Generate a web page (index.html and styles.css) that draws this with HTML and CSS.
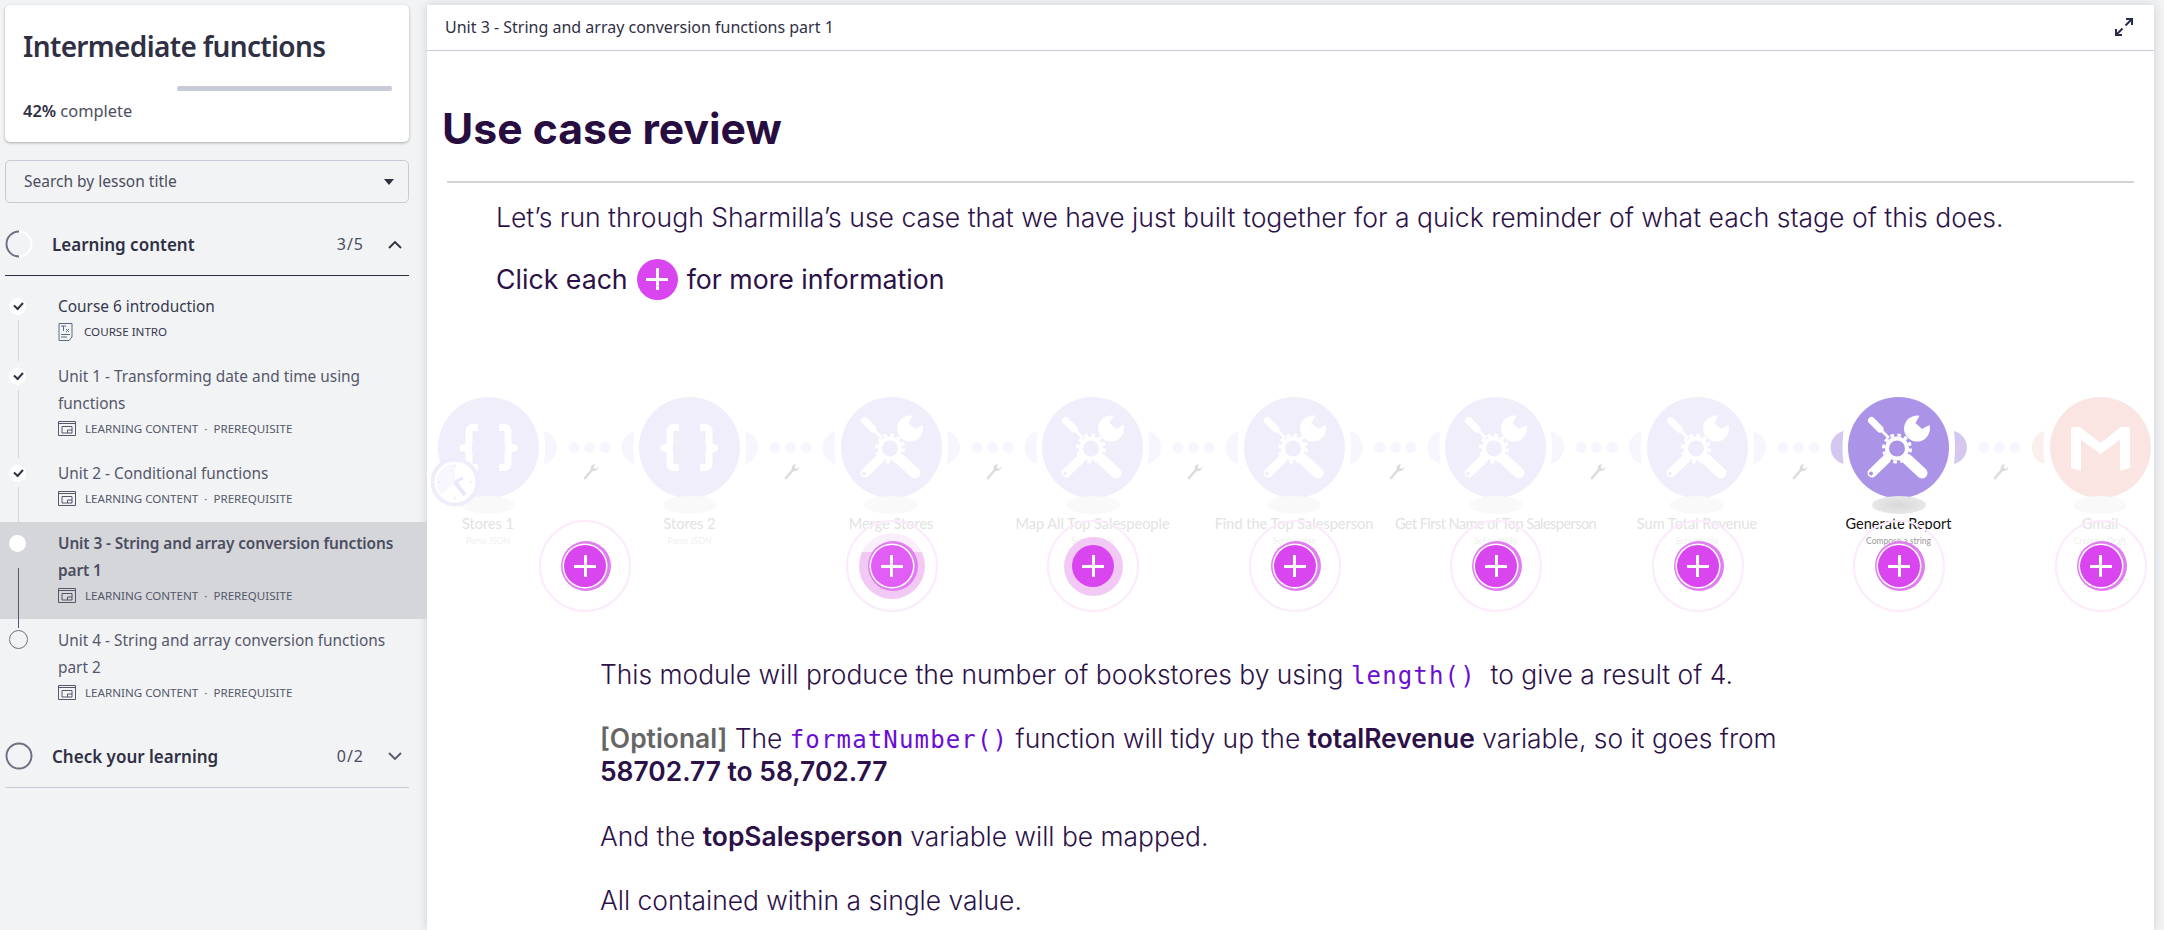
FILE: index.html
```html
<!DOCTYPE html>
<html lang="en">
<head>
  <meta charset="UTF-8" />
  <title>Use case review</title>
  <link rel="stylesheet" href="styles.css">
</head>
<body>

<svg class="defs" width="0" height="0">
  <symbol id="tools" viewBox="0 0 101 101">
    <g fill="none" stroke="#fff">
      <path d="M23.5 23.5 L32 32" stroke-width="7" stroke-linecap="round"/>
      <path d="M32 32 L41 41" stroke-width="2.6"/>
      <path d="M38.5 62 L38 62.5 L24 76" stroke-width="9" stroke-linecap="round"/>
      <path d="M59.5 62.5 L74 76" stroke-width="11" stroke-linecap="round"/>
      <circle cx="49" cy="51.5" r="13.5" stroke-width="3" stroke-dasharray="3.6 3.47"/>
      <circle cx="49" cy="51.5" r="10" fill="currentColor" stroke-width="4"/>
    </g>
    <circle cx="23" cy="76.5" r="2" fill="currentColor"/>
    <path d="M71.5 18.8 A13 13 0 1 0 81.5 28 L74 32 L67.5 26 Z M58 41 L54 42 L57 45 Z" fill="#fff"/>
  </symbol>
  <symbol id="braces" viewBox="0 0 101 101">
    <path d="M40 30.5 H35 Q31 30.5 31 35 V46 Q31 51 25 51 Q31 51 31 56 V66 Q31 70.5 35 70.5 H40 M61 30.5 H66 Q70 30.5 70 35 V46 Q70 51 76 51 Q70 51 70 56 V66 Q70 70.5 66 70.5 H61" fill="none" stroke="#fff" stroke-width="7" stroke-linejoin="round"/>
  </symbol>
  <symbol id="gmail" viewBox="0 0 101 101">
    <path d="M21 32 Q21 30 23 30 H30 L50.5 46 L71 30 H78 Q80 30 80 32 V71 L70 74 V43 L50.5 57 L31 43 V74 L21 71 Z" fill="#fff"/>
  </symbol>
  <symbol id="link" viewBox="0 0 100.5 101">
    <circle cx="35" cy="50.5" r="5.5"/>
    <circle cx="50.5" cy="50.5" r="5.5"/>
    <circle cx="66" cy="50.5" r="5.5"/>
    <path d="M46 81 L52 74" fill="none" stroke="#dcdcdc" stroke-width="2.6" stroke-linecap="round"/>
    <path d="M52 74 Q50 68 56 67 L54.5 70.5 L57 72 L59.5 69.5 Q59 75 52 74 Z" fill="#dcdcdc"/>
  </symbol>
  <symbol id="window" viewBox="0 0 18 15">
    <path d="M.5 .5 H17.5 V14.5 H.5 Z M.5 2.5 H17.5 M4 5.5 H14 V12 H4 Z M9.5 12 V9 H14" fill="none" stroke="#55576a"/>
  </symbol>
</svg>

<div class="app">

  <!-- Sidebar -->
  <aside class="sidebar">
    <div class="course-card">
      <h2>Intermediate functions</h2>
      <div class="track"></div>
      <p class="percent"><strong>42%</strong> complete</p>
    </div>

    <div class="search">
      <span>Search by lesson title</span>
      <i class="caret"></i>
    </div>

    <div class="section-head open">
      <svg class="ring" width="28" height="28" viewBox="0 0 28 28">
        <circle cx="14" cy="14" r="12.5" fill="none" stroke="#fff" stroke-width="2"/>
        <path d="M14 1.5 A12.5 12.5 0 0 0 14 26.5" fill="none" stroke="#6d6f80" stroke-width="2"/>
      </svg>
      <span class="section-title">Learning content</span>
      <span class="count">3/5</span>
      <svg width="14" height="9" viewBox="0 0 14 9"><path d="M1 8 L7 2 L13 8" fill="none" stroke="#2f3044" stroke-width="1.8"/></svg>
    </div>

    <ul class="lessons">
      <li class="lesson done dark">
        <div class="title">Course 6 introduction</div>
        <div class="meta">
          <svg class="doc" width="15" height="18" viewBox="0 0 15 18"><path d="M1 .5 H14 V14 L11 17.5 H1 Z M3 11.5 H12 M3 14 H9 M3 3 H8 M5.5 3 V8 M8 6 L11 9 M11 6 L8 9" fill="none" stroke="#5b6a80"/></svg>
          COURSE INTRO
        </div>
      </li>
      <li class="lesson done">
        <div class="title">Unit 1 - Transforming date and time using functions</div>
        <div class="meta"><svg width="18" height="15"><use href="#window"/></svg>LEARNING CONTENT &nbsp;·&nbsp; PREREQUISITE</div>
      </li>
      <li class="lesson done">
        <div class="title">Unit 2 - Conditional functions</div>
        <div class="meta"><svg width="18" height="15"><use href="#window"/></svg>LEARNING CONTENT &nbsp;·&nbsp; PREREQUISITE</div>
      </li>
      <li class="lesson current">
        <div class="title">Unit 3 - String and array conversion functions part 1</div>
        <div class="meta"><svg width="18" height="15"><use href="#window"/></svg>LEARNING CONTENT &nbsp;·&nbsp; PREREQUISITE</div>
      </li>
      <li class="lesson todo">
        <div class="title">Unit 4 - String and array conversion functions part 2</div>
        <div class="meta"><svg width="18" height="15"><use href="#window"/></svg>LEARNING CONTENT &nbsp;·&nbsp; PREREQUISITE</div>
      </li>
    </ul>

    <div class="section-head closed">
      <svg class="ring" width="28" height="28" viewBox="0 0 28 28">
        <circle cx="14" cy="14" r="12.5" fill="none" stroke="#6d6f80" stroke-width="2"/>
      </svg>
      <span class="section-title">Check your learning</span>
      <span class="count">0/2</span>
      <svg width="14" height="9" viewBox="0 0 14 9"><path d="M1 1 L7 7 L13 1" fill="none" stroke="#55576a" stroke-width="1.8"/></svg>
    </div>
  </aside>

  <!-- Lesson -->
  <main class="lesson-panel">
    <header class="panel-head">
      <span>Unit 3 - String and array conversion functions part 1</span>
      <svg width="18" height="18" viewBox="0 0 18 18">
        <path d="M10.5 7.5 L16 2 M11 1 H17 V7 M7.5 10.5 L2 16 M1 11 V17 H7" fill="none" stroke="#2a2d45" stroke-width="2"/>
      </svg>
    </header>

    <div class="page">
      <h1>Use case review</h1>
      <hr>
      <p class="intro">Let’s run through Sharmilla’s use case that we have just built together for a quick reminder of what each stage of this does.</p>
      <p class="click-each">Click each <span class="mini-plus"><i></i></span> for more information</p>

      <!-- Scenario diagram -->
      <div class="flow">
        <div class="flow-row">
          <div class="node">
            <svg class="disc" width="101" height="101"><use href="#braces"/></svg>
            <i class="shadow"></i>
            <div class="clock">
              <svg width="50" height="50" viewBox="0 0 50 50">
                <circle cx="25" cy="25" r="22.5" fill="#fff" stroke="#f0edfa" stroke-width="4"/>
                <path d="M25 25 V7 A18 18 0 0 0 12 38 Z" fill="#f8f7fd"/>
                <path d="M25 25 L33 21" stroke="#ebe7f8" stroke-width="3" fill="none"/>
                <path d="M25 25 L35 38" stroke="#ebe7f8" stroke-width="4" fill="none"/>
                <g fill="#ebe7f8">
                  <circle cx="25" cy="9" r="1"/>
                  <circle cx="41" cy="25" r="1"/>
                  <circle cx="25" cy="41" r="1"/>
                  <circle cx="9" cy="25" r="1"/>
                </g>
              </svg>
            </div>
            <div class="name">Stores 1</div>
            <div class="sub">Parse JSON</div>
          </div>
          <svg class="link" width="100.5" height="101"><use href="#link"/><path class="ear" d="M5 34 A17 17 0 0 1 5 67 Q7 50.5 5 34 Z"/><path class="ear" d="M95.5 34 A17 17 0 0 0 95.5 67 Q93.5 50.5 95.5 34 Z"/></svg>
          <div class="node">
            <svg class="disc" width="101" height="101"><use href="#braces"/></svg>
            <i class="shadow"></i>
            <div class="name">Stores 2</div>
            <div class="sub">Parse JSON</div>
          </div>
          <svg class="link" width="100.5" height="101"><use href="#link"/><path class="ear" d="M5 34 A17 17 0 0 1 5 67 Q7 50.5 5 34 Z"/><path class="ear" d="M95.5 34 A17 17 0 0 0 95.5 67 Q93.5 50.5 95.5 34 Z"/></svg>
          <div class="node">
            <svg class="disc" width="101" height="101"><use href="#tools"/></svg>
            <i class="shadow"></i>
            <div class="name">Merge Stores</div>
            <div class="sub">Merge</div>
          </div>
          <svg class="link" width="100.5" height="101"><use href="#link"/><path class="ear" d="M5 34 A17 17 0 0 1 5 67 Q7 50.5 5 34 Z"/><path class="ear" d="M95.5 34 A17 17 0 0 0 95.5 67 Q93.5 50.5 95.5 34 Z"/></svg>
          <div class="node">
            <svg class="disc" width="101" height="101"><use href="#tools"/></svg>
            <i class="shadow"></i>
            <div class="name">Map All Top Salespeople</div>
            <div class="sub">Set variable</div>
          </div>
          <svg class="link" width="100.5" height="101"><use href="#link"/><path class="ear" d="M5 34 A17 17 0 0 1 5 67 Q7 50.5 5 34 Z"/><path class="ear" d="M95.5 34 A17 17 0 0 0 95.5 67 Q93.5 50.5 95.5 34 Z"/></svg>
          <div class="node">
            <svg class="disc" width="101" height="101"><use href="#tools"/></svg>
            <i class="shadow"></i>
            <div class="name">Find the Top Salesperson</div>
            <div class="sub">Set variable</div>
          </div>
          <svg class="link" width="100.5" height="101"><use href="#link"/><path class="ear" d="M5 34 A17 17 0 0 1 5 67 Q7 50.5 5 34 Z"/><path class="ear" d="M95.5 34 A17 17 0 0 0 95.5 67 Q93.5 50.5 95.5 34 Z"/></svg>
          <div class="node">
            <svg class="disc" width="101" height="101"><use href="#tools"/></svg>
            <i class="shadow"></i>
            <div class="name tight">Get First Name of Top Salesperson</div>
            <div class="sub">Set variable</div>
          </div>
          <svg class="link" width="100.5" height="101"><use href="#link"/><path class="ear" d="M5 34 A17 17 0 0 1 5 67 Q7 50.5 5 34 Z"/><path class="ear" d="M95.5 34 A17 17 0 0 0 95.5 67 Q93.5 50.5 95.5 34 Z"/></svg>
          <div class="node">
            <svg class="disc" width="101" height="101"><use href="#tools"/></svg>
            <i class="shadow"></i>
            <div class="name">Sum Total Revenue</div>
            <div class="sub">Set variable</div>
          </div>
          <svg class="link" width="100.5" height="101"><use href="#link"/><path class="ear" d="M5 34 A17 17 0 0 1 5 67 Q7 50.5 5 34 Z"/><path class="ear active" d="M95.5 34 A17 17 0 0 0 95.5 67 Q93.5 50.5 95.5 34 Z"/></svg>
          <div class="node active">
            <svg class="disc" width="101" height="101"><use href="#tools"/></svg>
            <i class="shadow"></i>
            <div class="name">Generate Report</div>
            <div class="sub">Compose a string</div>
          </div>
          <svg class="link" width="100.5" height="101"><use href="#link"/><path class="ear active" d="M5 34 A17 17 0 0 1 5 67 Q7 50.5 5 34 Z"/><path class="ear mail" d="M95.5 34 A17 17 0 0 0 95.5 67 Q93.5 50.5 95.5 34 Z"/></svg>
          <div class="node mail">
            <svg class="disc" width="101" height="101"><use href="#gmail"/></svg>
            <i class="shadow"></i>
            <div class="name">Gmail</div>
            <div class="sub">Create a Draft</div>
          </div>
        </div>

        <div class="hotspots">
          <div class="hot gap-after"><span class="plus"><i></i></span></div>
          <div class="hot big"><span class="plus bright"><i></i></span></div>
          <div class="hot wide"><span class="plus flat"><i></i></span></div>
          <div class="hot"><span class="plus"><i></i></span></div>
          <div class="hot"><span class="plus"><i></i></span></div>
          <div class="hot"><span class="plus"><i></i></span></div>
          <div class="hot"><span class="plus"><i></i></span></div>
          <div class="hot"><span class="plus"><i></i></span></div>
        </div>
      </div>

      <!-- Module description -->
      <div class="details">
        <p>This module will produce the number of bookstores by using <code>length()</code>&nbsp; to give a result of 4.</p>
        <p><b class="muted">[Optional]</b> The <code>formatNumber()</code> function will tidy up the <b>totalRevenue</b> variable, so it goes from<br><b>58702.77 to 58,702.77</b></p>
        <p>And the <b>topSalesperson</b> variable will be mapped.</p>
        <p>All contained within a single value.</p>
      </div>
    </div>
  </main>
</div>

</body>
</html>
```

FILE: styles.css
```css
* {
  box-sizing: border-box;
}

html, body {
  margin: 0;
  height: 100%;
  overflow: hidden;
}

body {
  background-color: #f2f3f5;
  font-family: "Noto Sans", sans-serif;
  color: #2f3044;
}

.defs {
  position: absolute;
}

.app {
  display: flex;
  height: 930px;
  padding-right: 10px;
}

/* Sidebar */
.sidebar {
  flex: none;
  width: 427px;
  padding-top: 5px;
}

.course-card {
  width: 404px;
  height: 137px;
  margin-left: 5px;
  padding: 23px 17px 0 18px;
  background: white;
  border-radius: 5px;
  box-shadow: 0 1px 3px rgba(0,0,0,0.3);
}

.course-card h2 {
  margin: 0;
  font-size: 28px;
  line-height: 36px;
  font-weight: 600;
  letter-spacing: -0.65px;
  color: #2f3044;
}

.track {
  width: 215px;
  height: 5px;
  margin: 22px 0 0 154px;
  background-color: #c9cad8;
  border-radius: 2px;
}

.percent {
  margin: 8px 0 0;
  font-size: 16.4px;
  line-height: 24px;
  color: #4b4d60;
}

.percent strong {
  font-weight: 600;
  color: #2f3044;
}

.search {
  display: flex;
  align-items: center;
  justify-content: space-between;
  width: 404px;
  height: 43px;
  margin: 18px 0 0 5px;
  padding: 0 14px 2px 18px;
  border: 1px solid #c9cad8;
  border-radius: 5px;
  font-size: 15.5px;
  color: #4b4d60;
}

.caret {
  width: 0;
  height: 0;
  margin-top: 2px;
  border-left: 5px solid transparent;
  border-right: 5px solid transparent;
  border-top: 6px solid #2f3044;
}

.section-head {
  display: flex;
  align-items: center;
  width: 404px;
  height: 63px;
  margin-left: 5px;
  border-bottom: 1px solid #c9cad8;
}

.section-head.open {
  margin-top: 10px;
  border-bottom-color: #2f3044;
}

.section-head.closed {
  margin-top: 9px;
}

.ring {
  flex: none;
  margin-right: 19px;
}

.section-title {
  flex: 1;
  font-size: 17px;
  font-weight: 600;
}

.count {
  margin-right: 24px;
  font-size: 16px;
  letter-spacing: 1px;
  color: #4b4d60;
}

.section-head svg:last-child {
  margin-right: 7px;
}

/* Lessons */
.lessons {
  list-style: none;
  margin: 0;
  padding: 9px 0 0;
}

.lesson {
  position: relative;
  padding: 8px 14px 12px 58px;
  color: #55576a;
}

.lesson.dark {
  color: #36384c;
}

.lesson .title {
  font-size: 15.4px;
  line-height: 27px;
}

.meta {
  display: flex;
  align-items: center;
  gap: 9px;
  height: 23px;
  font-size: 11.6px;
  white-space: nowrap;
}

.doc {
  margin-right: 2px;
}

/* status dot */
.lesson::before {
  content: "";
  position: absolute;
  left: 9px;
  top: 13px;
  width: 17px;
  height: 17px;
  border-radius: 50%;
  background-color: white;
}

/* connector under the dot */
.lesson::after {
  content: "";
  position: absolute;
  left: 17.5px;
  top: 35px;
  bottom: -6px;
  width: 1px;
  background-color: #d8d9df;
}

.lesson.done .title::before {
  content: "";
  position: absolute;
  left: 14px;
  top: 17px;
  width: 7px;
  height: 4px;
  border-left: 2px solid #2f3044;
  border-bottom: 2px solid #2f3044;
  transform: rotate(-48deg);
}

.lesson.current {
  background-color: #d5d6da;
}

.lesson.current .title {
  font-weight: 600;
  letter-spacing: -0.1px;
  color: #4b4d60;
}

.lesson.current::after {
  top: 46px;
  bottom: -9px;
  background-color: #55576a;
}

.lesson.todo::before {
  top: 11px;
  background: transparent;
  border: 1px solid #6d6f80;
}

.lesson.todo::after {
  display: none;
}

/* Main panel */
.lesson-panel {
  flex: 1;
  min-width: 0;
  margin-top: 5px;
  background: white;
  box-shadow: 0 0 10px rgba(0,0,0,0.15);
  overflow: hidden;
}

.panel-head {
  display: flex;
  align-items: center;
  justify-content: space-between;
  height: 46px;
  padding: 0 21px 2px 18px;
  border-bottom: 1px solid #c9cad8;
  font-size: 16px;
  color: #2f3044;
}

.page {
  padding-top: 50px;
  color: #2c1149;
  font-family: Inter, sans-serif;
}

h1 {
  margin: 0 0 0 15px;
  font-size: 42.7px;
  line-height: 56px;
  font-weight: 700;
  color: #280d40;
}

hr {
  height: 2px;
  margin: 24px 20px 0 20px;
  border: none;
  background-color: #d6d4d8;
}

.intro {
  margin: 18px 0 0 69px;
  font-size: 26.55px;
  line-height: 32px;
  font-weight: 300;
  white-space: nowrap;
}

.click-each {
  display: flex;
  align-items: center;
  gap: 9px;
  height: 46px;
  margin: 23px 0 0 69px;
  font-size: 26.7px;
  font-weight: 400;
}

.mini-plus {
  position: relative;
  width: 41px;
  height: 41px;
  border-radius: 50%;
  background-color: #d945ef;
}

/* plus sign */
.mini-plus i,
.plus i {
  position: absolute;
  left: 50%;
  top: 50%;
  width: 22px;
  height: 3px;
  margin: -1.5px 0 0 -11px;
  background-color: white;
}

.mini-plus i::after,
.plus i::after {
  content: "";
  position: absolute;
  left: 9.5px;
  top: -9.5px;
  width: 3px;
  height: 22px;
  background-color: white;
}

/* Diagram */
.flow {
  position: relative;
  height: 240px;
  margin-top: 80px;
}

.flow-row {
  display: flex;
  padding: 15px 0 0 10.5px;
}

.node {
  position: relative;
  flex: none;
  width: 101px;
}

.disc {
  display: block;
  border-radius: 50%;
  background-color: #f1eefb;
  color: #f1eefb;
}

.node.active .disc {
  background-color: #ab94e8;
  color: #ab94e8;
}

.node.mail .disc {
  background-color: #fae5e2;
}

.link {
  flex: none;
  fill: #f7f5fd;
}

.ear.active {
  fill: #d5c8f0;
}

.ear.mail {
  fill: #fcf0ee;
}

.shadow {
  position: absolute;
  left: 23.5px;
  top: 99px;
  width: 54px;
  height: 18px;
  border-radius: 50%;
  background-color: #f9f9f9;
}

.node.active .shadow {
  background: radial-gradient(#d8d8d8, #eeeeee);
}

.clock {
  position: absolute;
  left: -8px;
  top: 60px;
}

.name,
.sub {
  position: absolute;
  left: 50%;
  transform: translateX(-50%);
  text-align: center;
  white-space: nowrap;
  font-family: Lato, sans-serif;
  color: #e2e2e2;
}

.name {
  top: 118px;
  font-size: 14.5px;
  line-height: 18px;
}

.name.tight {
  letter-spacing: -0.55px;
}

.sub {
  top: 139px;
  font-size: 8.5px;
  line-height: 11px;
  color: #efefef;
}

.node.active .name {
  color: #111;
}

.node.active .sub {
  color: #999;
}

.hotspots {
  position: absolute;
  left: 112px;
  top: 138px;
  display: flex;
  gap: 109.5px;
}

.hot {
  position: relative;
  display: flex;
  align-items: center;
  justify-content: center;
  flex: none;
  width: 92px;
  height: 92px;
  border: 2px solid #fcebfd;
  border-radius: 50%;
}

.gap-after {
  margin-right: 105px;
}

.plus {
  position: relative;
  width: 42px;
  height: 42px;
  border-radius: 50%;
  background-color: #d945ef;
  box-shadow: 0 0 0 1.5px white, 1px 0 0 4px #e27cf3;
}

.plus.bright {
  background-color: #e25cf6;
}

.plus.flat {
  box-shadow: none;
}

.hot.big::before,
.hot.wide::before {
  content: "";
  position: absolute;
  border-radius: 50%;
}

.hot.big::before {
  width: 66px;
  height: 66px;
  background: linear-gradient(#fbeefc 29%, #f2c9f4 29%);
}

.hot.wide::before {
  width: 59px;
  height: 59px;
  background-color: #f2c9f4;
}

/* Description */
.details {
  margin: 35.5px 0 0 173px;
  font-size: 26.4px;
  line-height: 33px;
  font-weight: 300;
  width: 1280px;
}

.details p {
  margin: 0 0 31.5px;
}

.details b {
  font-weight: 600;
}

.details .muted {
  color: #666;
}

code {
  font-family: "DejaVu Sans Mono", monospace;
  font-size: 24px;
  line-height: 1;
  letter-spacing: 1.15px;
  color: #6a0dd6;
}
```
